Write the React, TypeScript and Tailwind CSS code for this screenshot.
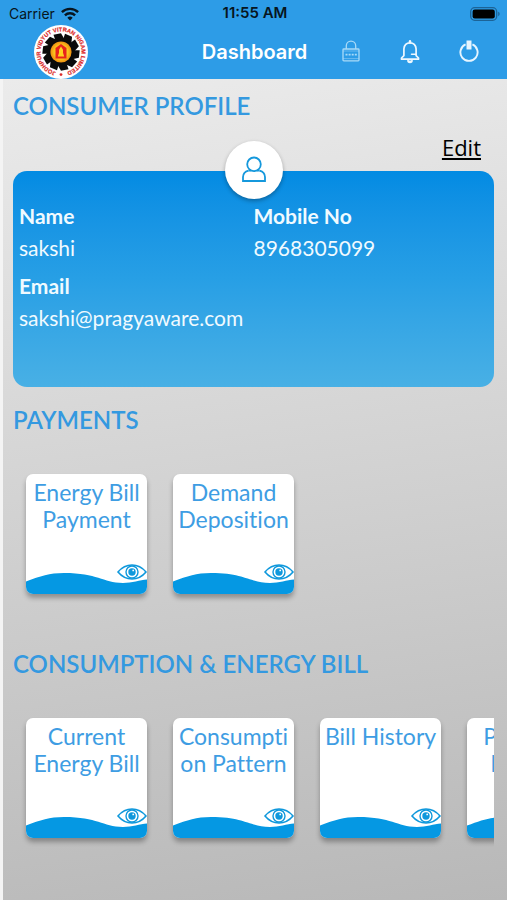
import type { ReactNode } from 'react';

type Tile = { id: string; lines: string[] };

const payments: Tile[] = [
  { id: 'energy-bill-payment', lines: ['Energy Bill', 'Payment'] },
  { id: 'demand-deposition', lines: ['Demand', 'Deposition'] },
];

const consumption: Tile[] = [
  { id: 'current-energy-bill', lines: ['Current', 'Energy Bill'] },
  { id: 'consumption-pattern', lines: ['Consumpti', 'on Pattern'] },
  { id: 'bill-history', lines: ['Bill History'] },
  { id: 'payment-history', lines: ['Payment', 'History'] },
];

function WifiIcon() {
  return (
    <svg viewBox="0 0 18 14" className="h-[14px] w-[18px]" fill="none" stroke="#071520" strokeWidth="2.4" aria-hidden="true">
      <path d="M0.9 5.2a11.5 11.5 0 0 1 16.2 0" />
      <path d="M3.9 8.4a7.3 7.3 0 0 1 10.2 0" />
      <path d="M9 13.6l-2.7-2.8a3.9 3.9 0 0 1 5.4 0z" fill="#071520" stroke="none" />
    </svg>
  );
}

function BatteryIcon() {
  return (
    <svg viewBox="0 0 31 14" className="h-[14px] w-[31px]" aria-hidden="true">
      <rect x="0.7" y="0.7" width="26" height="12.6" rx="4" fill="none" stroke="#1c6397" strokeWidth="1.3" />
      <rect x="2.6" y="2.6" width="22.2" height="8.8" rx="2.2" fill="#000" />
      <path d="M28.2 4.8c1.9.6 1.9 3.8 0 4.4z" fill="#1c6397" />
    </svg>
  );
}

const blades = [0, 36, 72, 108, 144, 180, 216, 252, 288, 324];

function Logo() {
  return (
    <svg viewBox="0 0 54 54" className="size-[54px]" role="img" aria-label="Jodhpur Vidyut Vitran Nigam Limited">
      <defs>
        <path id="logo-ring" d="M27 47.6a20.6 20.6 0 1 1 0.1 0" />
        <radialGradient id="logo-sun">
          <stop offset="0" stopColor="#ffe02a" />
          <stop offset="0.65" stopColor="#fbc51c" />
          <stop offset="1" stopColor="#ee8d12" />
        </radialGradient>
      </defs>
      <circle cx="27" cy="27" r="27" fill="#fff" />
      <circle cx="27" cy="27" r="13.5" fill="#0b0b0b" />
      {blades.map((angle) => (
        <path key={angle} d="M21.5 16L19.5 9.8L27 8.2L31.5 16z" fill="#0b0b0b" transform={`rotate(${angle} 27 27)`} />
      ))}
      <circle cx="27" cy="27" r="10.6" fill="url(#logo-sun)" />
      <path d="M27 19l5.5 4v10.5h-11V23z" fill="#e8231c" />
      <path d="M27 21.5l2 3.2v3l1.2 3.8h-6.4l1.2-3.8v-3z" fill="#ffd21f" />
      <text fill="#dc2b2b" stroke="#dc2b2b" strokeWidth="0.2" fontFamily="Liberation Sans, sans-serif" fontWeight="700" fontSize="5.7">
        <textPath href="#logo-ring" startOffset="5">JODHPUR VIDYUT VITRAN NIGAM LIMITED</textPath>
      </text>
      <circle cx="27" cy="49.6" r="1.4" fill="#dc2b2b" />
    </svg>
  );
}

function LockIcon() {
  return (
    <svg viewBox="0 0 20 24" className="h-6 w-5" fill="none" stroke="#a9daf8" strokeWidth="1.3" aria-hidden="true">
      <path d="M5.3 9V5.8a4.7 4.7 0 0 1 9.4 0V9" />
      <rect x="2" y="9" width="16" height="11.8" rx="0.8" />
      <path d="M2 11h16M2 18.6h16" strokeWidth="0.5" />
      <path d="M4.5 14.6h11.5" strokeWidth="1.8" strokeDasharray="2 1.1" />
    </svg>
  );
}

function BellIcon() {
  return (
    <svg viewBox="0 0 20 24" className="h-6 w-5" fill="none" stroke="#eef8ff" strokeWidth="1.7" strokeLinecap="round" strokeLinejoin="round" aria-hidden="true">
      <path d="M10 1.2v1.4" strokeWidth="2.4" />
      <path d="M1.5 19.2h17v-1.2l-2.4-2.4V8.8C15.7 5.2 13.2 2.9 10 2.9S4.3 5.2 3.9 8.8v6.8l-2.4 2.4z" />
      <path d="M16 14.3h-4.5" strokeWidth="1.5" />
      <path d="M8 20.5a2 1.8 0 0 0 4 0" fill="#eef8ff" />
    </svg>
  );
}

function PowerIcon() {
  return (
    <svg viewBox="0 0 20 24" className="h-6 w-5" fill="none" stroke="#e6f5ff" aria-hidden="true">
      <path d="M6.6 4.4a8.6 8.6 0 1 0 6.8 0" strokeWidth="1.9" />
      <path d="M10 0.5v9" strokeWidth="5" />
    </svg>
  );
}

function UserIcon() {
  return (
    <svg viewBox="0 0 24 28" className="h-7 w-6" fill="none" stroke="#1598dc" strokeWidth="1.8" aria-hidden="true">
      <circle cx="12" cy="8.3" r="6.8" />
      <path d="M6.5 14.6C3 15.6 1 18 1 21V25h22v-4c0-3-2-5.400-5.500-6.400" />
      <path d="M6.500 14.600h2.500M15 14.600h2.500" />
    </svg>
  );
}

function EyeIcon() {
  return (
    <svg viewBox="0 0 30 16" className="h-4 w-[30px]" fill="none" stroke="#0f98dc" strokeWidth="1.6" aria-hidden="true">
      <path d="M1 8C5 3.2 9.5 1 15 1s10 2.2 14 7c-4 4.8-8.5 7-14 7S5 12.8 1 8z" />
      <circle cx="15" cy="8" r="6" strokeWidth="1.4" />
      <circle cx="15" cy="8" r="3.7" fill="#0f98dc" stroke="none" />
      <circle cx="16.2" cy="6.4" r="0.9" fill="#fff" stroke="none" />
    </svg>
  );
}

function TileCard({ tile }: { tile: Tile }) {
  return (
    <button
      type="button"
      className="relative flex h-[120px] w-[121px] shrink-0 flex-col items-center rounded-[7px] bg-white pt-[5px] text-[23px] leading-[27px] text-[#3e9de3] shadow-[0_4px_5px_rgba(0,0,0,0.3)] [font-variant-ligatures:none]"
    >
      {tile.lines.map((line) => (
        <span key={line} className="whitespace-nowrap">{line}</span>
      ))}
      <svg viewBox="0 0 121 22" preserveAspectRatio="none" className="absolute bottom-0 left-0 h-[22px] w-full rounded-b-[7px]" aria-hidden="true">
        <path d="M0 9.5C15 4 23 1 38 1C72 1 76 10.5 97 11C106 11 114 8 121 7.5V22H0z" fill="#0598e3" />
      </svg>
      <span className="absolute right-0 bottom-[14px]">
        <EyeIcon />
      </span>
    </button>
  );
}

function TileRow({ tiles }: { tiles: Tile[] }) {
  return (
    <div className="flex gap-[26px] overflow-x-auto px-[13px] pt-[38px] pb-[54px] [scrollbar-width:none]">
      {tiles.map((tile) => (
        <TileCard key={tile.id} tile={tile} />
      ))}
    </div>
  );
}

function SectionTitle({ children }: { children: ReactNode }) {
  return <h2 className="text-[24px] leading-8 font-semibold text-[#3499e0]">{children}</h2>;
}

function Field({ label, value }: { label: string; value: string }) {
  return (
    <div>
      <dt className="text-[21px] leading-8 font-bold">{label}</dt>
      <dd className="text-[21px] leading-8">{value}</dd>
    </div>
  );
}

export default function App() {
  return (
    <div className="flex min-h-screen flex-col bg-[#f4f4f4] font-[Lato,sans-serif]">
      <header className="bg-[#2d9ce7] font-[Inter,sans-serif]">
        <div className="grid h-[25px] grid-cols-3 items-center pt-[2px] pr-[6px] pl-[9px] text-[14px] text-[#071520]">
          <div className="flex items-center gap-[6px]">
            <span>Carrier</span>
            <WifiIcon />
          </div>
          <span className="text-center text-[15px] font-semibold">11:55 AM</span>
          <div className="flex justify-end">
            <BatteryIcon />
          </div>
        </div>
        <div className="grid h-[54px] grid-cols-[1fr_auto_1fr] items-center pr-7 pl-[34px]">
          <Logo />
          <h1 className="pr-[4px] text-[20px] font-semibold text-white">Dashboard</h1>
          <nav className="flex items-center justify-end gap-[39px]">
            <button type="button" aria-label="Change password"><LockIcon /></button>
            <button type="button" aria-label="Notifications"><BellIcon /></button>
            <button type="button" aria-label="Log out"><PowerIcon /></button>
          </nav>
        </div>
      </header>

      <main className="ml-[3px] flex-1 bg-linear-[172deg,#ebebeb,#e5e5e5_12%,#b8b8b8] pt-[11px] pr-[13px] pl-[10px]">
        <SectionTitle>CONSUMER PROFILE</SectionTitle>
        <div className="flex justify-end pt-[9px] pr-[13px] pb-[8px]">
          <a href="#edit" className="font-['Open_Sans',sans-serif] text-[22px] leading-8 text-black underline underline-offset-2">Edit</a>
        </div>
        <section className="relative h-[216px] rounded-[14px] bg-linear-to-b from-[#028be3] via-[#279fe5] to-[#48b0e5] px-[6px] pt-[29px] text-[#f0faff]">
          <div className="absolute -top-[30px] left-1/2 flex size-[58px] -translate-x-1/2 items-center justify-center rounded-full bg-white shadow-[0_2px_4px_rgba(0,0,0,0.3)]">
            <UserIcon />
          </div>
          <dl className="grid grid-cols-2 gap-y-[6px]">
            <Field label="Name" value="sakshi" />
            <Field label="Mobile No" value="8968305099" />
            <Field label="Email" value="sakshi@pragyaware.com" />
          </dl>
        </section>
        <section className="pt-[17px]">
          <SectionTitle>PAYMENTS</SectionTitle>
          <TileRow tiles={payments} />
        </section>
        <section>
          <SectionTitle>CONSUMPTION &amp; ENERGY BILL</SectionTitle>
          <TileRow tiles={consumption} />
        </section>
      </main>
    </div>
  );
}
